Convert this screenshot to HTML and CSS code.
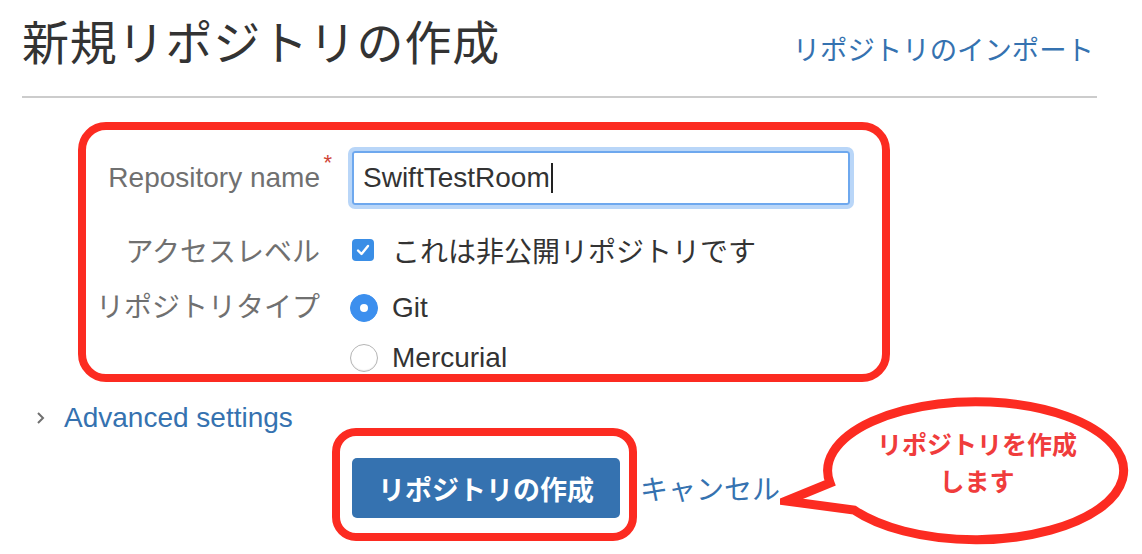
FILE: index.html
```html
<!DOCTYPE html>
<html lang="ja">

<head>
    <meta charset="UTF-8">
    <meta name="viewport" content="width=device-width, initial-scale=1.0">
    <title>新規リポジトリの作成</title>
    <link rel="stylesheet" href="styles.css">
</head>

<body>
    <div class="page">
        <div class="header">
            <h1 class="title">新規リポジトリの作成</h1>
            <a class="import-link" href="#">リポジトリのインポート</a>
        </div>

        <form class="create-form mark-box">
            <div class="field field-name">
                <label class="field-label" for="name">Repository name<span class="required">*</span></label>
                <div class="text-input" id="name">SwiftTestRoom<span class="caret"></span></div>
            </div>

            <div class="field field-access">
                <span class="field-label">アクセスレベル</span>
                <label class="option">
                    <span class="checkbox">
                        <svg width="14" height="12" viewBox="0 0 14 12">
                            <path d="M2 6.5 L5.5 10 L12 2" fill="none" stroke="#fff" stroke-width="2.4" stroke-linecap="round" stroke-linejoin="round"/>
                        </svg>
                    </span>
                    これは非公開リポジトリです
                </label>
            </div>

            <div class="field field-type">
                <span class="field-label">リポジトリタイプ</span>
                <div class="radio-group">
                    <label class="option"><span class="radio checked"></span>Git</label>
                    <label class="option"><span class="radio"></span>Mercurial</label>
                </div>
            </div>
        </form>

        <div class="advanced">
            <svg class="chevron" width="9" height="14" viewBox="0 0 9 14">
                <path d="M2 2 L7 7 L2 12" fill="none" stroke="#707070" stroke-width="2"/>
            </svg>
            <a href="#">Advanced settings</a>
        </div>

        <div class="actions">
            <div class="mark-box submit-box">
                <button class="btn-primary" type="button">リポジトリの作成</button>
            </div>
            <a class="cancel" href="#">キャンセル</a>
        </div>

        <!-- annotation bubble -->
        <div class="callout">
            <svg width="355" height="155" viewBox="0 0 355 155">
                <path d="M50 88 A148 69 0 1 1 74 115 L6 106 Z" fill="#fff" stroke="#fc2b21" stroke-width="9" stroke-linejoin="miter"/>
            </svg>
            <div class="callout-text">リポジトリを作成<br>します</div>
        </div>
    </div>
</body>

</html>
```

FILE: styles.css
```css
body {
    margin: 0;
    background: #fff;
    font-family: "Liberation Sans", "Noto Sans CJK JP", sans-serif;
    color: #333;
}

a {
    color: #3572b0;
    text-decoration: none;
}

.page {
    position: relative;
    width: 1075px;
    height: 554px;
    padding-left: 22px;
}

.header {
    display: flex;
    justify-content: space-between;
    align-items: baseline;
    padding-top: 12px;
    height: 84px;
    border-bottom: 2px solid #ccc;
}

.title {
    margin: 0;
    font-family: "Noto Sans CJK JP", sans-serif;
    font-size: 47px;
    font-weight: normal;
    letter-spacing: 0.8px;
    line-height: 56px;
    color: #333;
}

.import-link {
    font-size: 27.4px;
    margin-right: 3px;
}

.mark-box {
    border: 8px solid #fc2b21;
    border-radius: 28px;
    box-sizing: border-box;
}

.create-form {
    width: 812px;
    height: 260px;
    margin: 24px 0 0 56px;
    padding: 18px 29px 0 0;
    display: flex;
    flex-direction: column;
}

.field {
    display: grid;
    grid-template-columns: 234px 1fr;
    column-gap: 30px;
    align-items: center;
}

.field-label {
    text-align: right;
    font-size: 28px;
    color: #707070;
    position: relative;
}

.field-name {
    height: 60px;
}

.field-access {
    margin-top: 22px;
    height: 32px;
}

.field-type {
    margin-top: 30px;
    align-items: start;
}

.field-type .field-label {
    line-height: 32px;
}

.required {
    position: absolute;
    right: -12px;
    top: -12px;
    color: #d04437;
    font-size: 22px;
}

.text-input {
    height: 50px;
    margin: 0 3px 0 2px;
    padding-left: 9px;
    border: 2px solid #6ea8ee;
    border-radius: 3px;
    box-shadow: 0 0 0 4px #b9d6f8;
    display: flex;
    align-items: center;
    font-size: 28px;
    color: #333;
}

.caret {
    display: inline-block;
    width: 0;
    height: 30px;
    border-left: 2px solid #222;
    margin-left: 1px;
}

.option {
    display: flex;
    align-items: center;
    height: 32px;
    font-size: 28px;
    color: #333;
}

.checkbox {
    width: 22px;
    height: 22px;
    margin: 0 18px 0 2px;
    border-radius: 4px;
    background: #3a8ee6;
    display: flex;
    align-items: center;
    justify-content: center;
}

.radio-group {
    display: flex;
    flex-direction: column;
    gap: 18px;
}

.radio {
    width: 26px;
    height: 26px;
    margin-right: 14px;
    border-radius: 50%;
    border: 1px solid #b5b5b5;
    background: #fff;
    box-shadow: inset 0 -1px 1px rgba(0, 0, 0, 0.08);
    position: relative;
}

.radio.checked {
    border-color: #3c8fee;
    background: #3c8fee;
    box-shadow: none;
}

.radio.checked::after {
    content: "";
    position: absolute;
    left: 9px;
    top: 9px;
    width: 8px;
    height: 8px;
    border-radius: 50%;
    background: #fff;
}

.advanced {
    display: flex;
    align-items: center;
    height: 24px;
    margin-top: 24px;
    font-size: 28px;
}

.chevron {
    margin: 0 19px 0 14px;
}

.actions {
    display: flex;
    align-items: center;
    margin: -2px 0 0 310px;
}

.submit-box {
    border-radius: 24px;
    padding: 22px 9px 15px 12px;
}

.btn-primary {
    width: 268px;
    height: 60px;
    border: none;
    border-radius: 5px;
    background: #3572b0;
    color: #fff;
    font-family: "Noto Sans CJK JP", sans-serif;
    font-size: 27px;
    font-weight: bold;
    cursor: pointer;
}

.cancel {
    margin: 6px 0 0 3px;
    font-size: 28px;
}

.callout {
    position: absolute;
    left: 780px;
    top: 395px;
    width: 355px;
    height: 155px;
}

.callout svg {
    display: block;
}

.callout-text {
    position: absolute;
    left: 92px;
    top: 30px;
    width: 210px;
    text-align: center;
    font-family: "Noto Sans CJK JP", sans-serif;
    font-size: 25px;
    font-weight: bold;
    line-height: 37px;
    color: #f03c3c;
}
```
